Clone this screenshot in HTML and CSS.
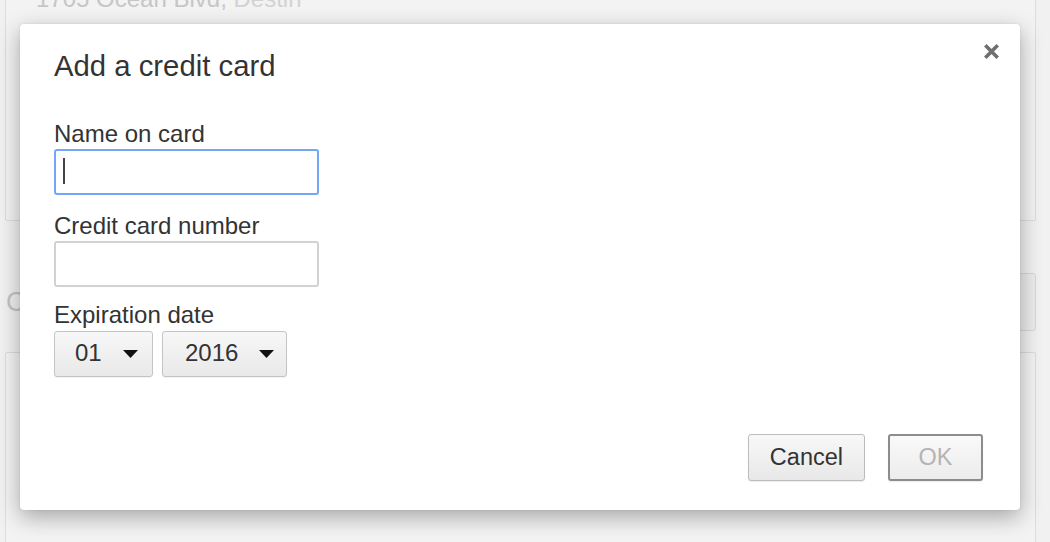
FILE: index.html
```html
<!DOCTYPE html>
<html lang="en">
<head>
<meta charset="utf-8">
<title>Add a credit card</title>
<link rel="stylesheet" href="styles.css">
</head>
<body>
<div class="page">
  <div class="card card-top">
    <div class="addr"><span class="addr-main">1705 Ocean Blvd,</span> <span class="addr-city">Destin</span></div>
  </div>
  <div class="section-row">
    <div class="section-title">Credit cards</div>
    <div class="bg-button">Add credit card</div>
  </div>
  <div class="card card-bottom"></div>
</div>

<div class="dialog">
  <button class="close" aria-label="Close">
    <svg width="17" height="17" viewBox="0 0 17 17"><path d="M2.3 2.3 L14.7 14.7 M14.7 2.3 L2.3 14.7" stroke="#6f6f6f" stroke-width="3.6" stroke-linecap="butt" fill="none"/></svg>
  </button>
  <h1 class="title">Add a credit card</h1>
  <div class="field">
    <div class="label">Name on card</div>
    <div class="input is-focused"><span class="caret"></span></div>
  </div>
  <div class="field field-number">
    <div class="label">Credit card number</div>
    <div class="input"></div>
  </div>
  <div class="field field-exp">
    <div class="label">Expiration date</div>
    <div class="selects">
      <div class="select select-month"><span>01</span><svg class="arrow" width="15" height="8" viewBox="0 0 15 8"><path d="M0 0 H15 L7.5 8 Z" fill="#111"/></svg></div>
      <div class="select select-year"><span>2016</span><svg class="arrow" width="15" height="8" viewBox="0 0 15 8"><path d="M0 0 H15 L7.5 8 Z" fill="#111"/></svg></div>
    </div>
  </div>
  <div class="spacer"></div>
  <div class="actions">
    <button class="btn btn-cancel">Cancel</button>
    <button class="btn btn-ok" disabled>OK</button>
  </div>
</div>
</body>
</html>
```

FILE: styles.css
```css
* { box-sizing: border-box; }

html, body {
  margin: 0;
  padding: 0;
  height: 100%;
  overflow: hidden;
}

body {
  background: #f1f1f1;
  font-family: "Liberation Sans", Arial, Helvetica, sans-serif;
  color: #333;
  position: relative;
}

/* background settings page (dimmed) */
.page {
  padding: 0 14px 0 5px;
}

.card {
  border: 1px solid #dcdcdc;
  border-radius: 2px;
  background: #f3f3f3;
}

.card-top {
  margin-top: -30px;
  height: 251px;
  padding: 14px 0 0 30px;
}

.addr {
  font-size: 24px;
  line-height: 28px;
  white-space: nowrap;
}

.addr-main { color: #c6c6c6; }
.addr-city { color: #d2d2d2; }

.section-row {
  margin-top: 52px;
  height: 58px;
  display: flex;
  align-items: center;
  justify-content: space-between;
}

.section-title {
  font-size: 27px;
  color: #c4c4c4;
  padding-left: 1px;
}

.bg-button {
  height: 58px;
  width: 220px;
  border: 1px solid #d8d8d8;
  border-radius: 3px;
  background: #ececec;
  color: #c8c8c8;
  font-size: 22px;
  display: flex;
  align-items: center;
  justify-content: center;
}

.card-bottom {
  margin-top: 21px;
  height: 260px;
}

/* dialog */
.dialog {
  position: absolute;
  left: 20px;
  top: 24px;
  width: 1000px;
  height: 486px;
  background: #fff;
  border-radius: 4px;
  box-shadow: 0 7px 22px rgba(0, 0, 0, 0.32), 0 0 3px rgba(0, 0, 0, 0.08);
  padding: 25px 37px 29px 34px;
  display: flex;
  flex-direction: column;
}

.close {
  position: absolute;
  top: 19px;
  right: 20px;
  width: 17px;
  height: 17px;
  padding: 0;
  border: 0;
  background: none;
  display: block;
}

.close svg { display: block; }

.title {
  margin: 0;
  font-size: 29.3px;
  line-height: 34px;
  font-weight: normal;
  color: #333;
}

.field {
  margin-top: 37px;
}

.field-number { margin-top: 17px; }
.field-exp { margin-top: 14px; }

.label {
  font-size: 24px;
  line-height: 28px;
  color: #333;
}

.input {
  margin-top: 1px;
  width: 265px;
  height: 46px;
  border: 2px solid #d2d2d2;
  border-radius: 3px;
  background: #fff;
  padding: 0 0 0 7px;
  display: flex;
  align-items: center;
}

.input.is-focused {
  border-color: #72a6f6;
}

.caret {
  display: block;
  width: 2px;
  height: 26px;
  background: #444;
  margin-top: -3px;
}

.selects {
  margin-top: 2px;
  display: flex;
  gap: 9px;
}

.select {
  height: 46px;
  border: 1px solid #c4c4c4;
  border-radius: 3px;
  background: linear-gradient(#f7f7f7, #e9e9e9);
  box-shadow: 0 1px 1px rgba(0, 0, 0, 0.06);
  display: flex;
  align-items: center;
  justify-content: space-between;
  font-size: 24px;
  color: #333;
}

.select span { margin-top: -2px; }

.select-month {
  width: 99px;
  padding: 0 14px 0 20px;
}

.select-year {
  width: 125px;
  padding: 0 12px 0 22px;
}

.arrow { display: block; }

.spacer { flex: 1; }

.actions {
  display: flex;
  justify-content: flex-end;
  gap: 23px;
}

.btn {
  height: 47px;
  min-width: 95px;
  padding: 0 21px;
  border: 1px solid #bcbcbc;
  border-radius: 3px;
  background: linear-gradient(#f8f8f8, #e8e8e8);
  box-shadow: 0 1px 1px rgba(0, 0, 0, 0.08);
  font-family: "Liberation Sans", Arial, Helvetica, sans-serif;
  font-size: 23.5px;
  color: #333;
  line-height: 1;
}

.btn-ok {
  border: 2px solid #8c8c8c;
  color: #b4b4b4;
  background: linear-gradient(#f9f9f9, #ececec);
}
```
